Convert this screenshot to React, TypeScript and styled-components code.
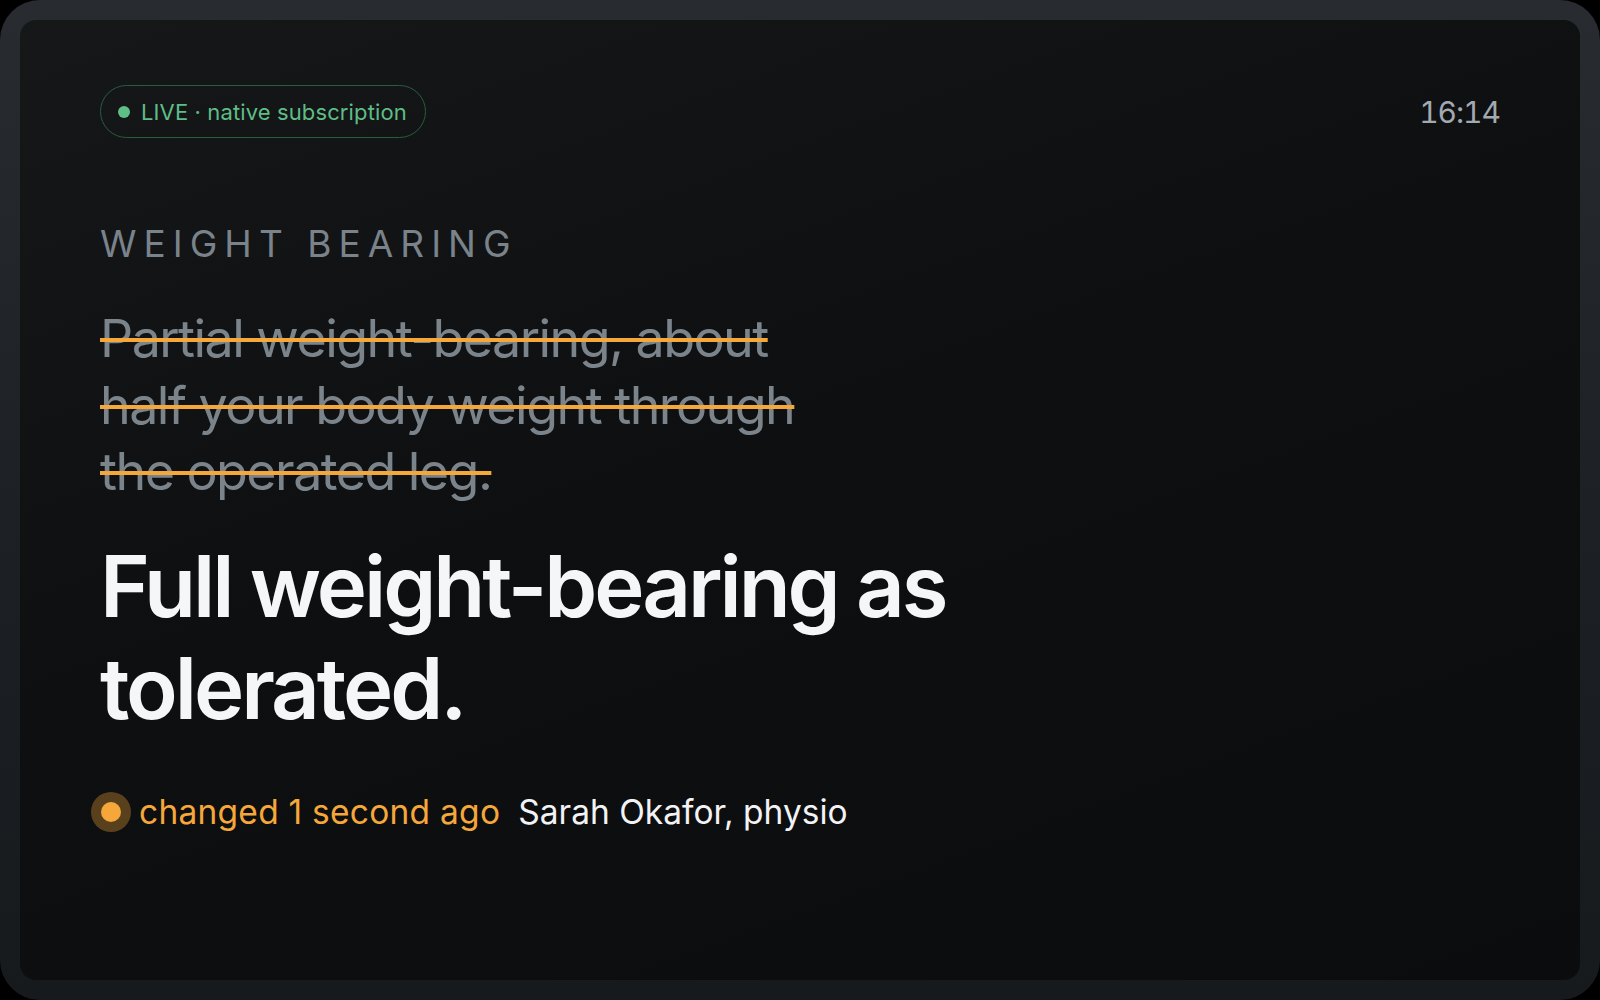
import styled, { createGlobalStyle } from "styled-components";

const GlobalStyle = createGlobalStyle`
  html, body {
    margin: 0;
    padding: 0;
    background: #000;
  }
  body {
    font-family: Inter, "Noto Sans", "Liberation Sans", sans-serif;
    -webkit-font-smoothing: antialiased;
  }
`;

const previousText = "Partial weight-bearing, about half your body weight through the operated leg.";
const currentText = "Full weight-bearing as tolerated.";

function App() {
  return (
    <>
      <GlobalStyle />
      <Bezel>
        <Screen>
          <TopBar>
            <LivePill>
              <LiveDot />
              LIVE · native subscription
            </LivePill>
            <Clock>16:14</Clock>
          </TopBar>
          <Label>Weight bearing</Label>
          <Previous>{previousText}</Previous>
          <Current>{currentText}</Current>
          <MetaRow>
            <ChangeDot />
            <Changed>changed 1 second ago</Changed>
            <Author>Sarah Okafor, physio</Author>
          </MetaRow>
        </Screen>
      </Bezel>
    </>
  );
}

export default App;

const Bezel = styled.div`
  width: 1600px;
  height: 1000px;
  box-sizing: border-box;
  padding: 20px;
  border-radius: 40px;
  background: linear-gradient(180deg, #282c30 0%, #1d2024 50%, #171a1d 100%);
`;

const Screen = styled.div`
  height: 100%;
  box-sizing: border-box;
  padding: 65px 80px 0 80px;
  border-radius: 16px;
  background: linear-gradient(160deg, #151719 0%, #0e0f11 45%, #0b0c0e 100%);
  display: flex;
  flex-direction: column;
  align-items: flex-start;
`;

const TopBar = styled.div`
  align-self: stretch;
  display: flex;
  justify-content: space-between;
  align-items: center;
`;

const LivePill = styled.div`
  display: inline-flex;
  align-items: center;
  gap: 11px;
  height: 53px;
  box-sizing: border-box;
  padding: 0 18px 0 17px;
  border: 1px solid #2b5c3f;
  border-radius: 27px;
  color: #5fbd86;
  font-size: 22px;
  letter-spacing: 0.12px;
`;

const LiveDot = styled.span`
  width: 12px;
  height: 12px;
  border-radius: 50%;
  background: #5fbd86;
`;

const Clock = styled.div`
  color: #a3a9b0;
  font-size: 30px;
  letter-spacing: -1px;
  font-variant-numeric: tabular-nums;
`;

const Label = styled.div`
  margin-top: 84px;
  color: #7a828a;
  font-size: 37px;
  line-height: 44px;
  letter-spacing: 0.19em;
  text-transform: uppercase;
`;

const Previous = styled.div`
  margin-top: 40px;
  max-width: 720px;
  color: #7b838b;
  font-size: 52px;
  line-height: 66.7px;
  letter-spacing: -0.03em;
  text-decoration: line-through;
  text-decoration-color: #f5a73a;
  text-decoration-thickness: 4px;
`;

const Current = styled.div`
  margin-top: 30px;
  max-width: 900px;
  color: #f5f6f8;
  font-size: 85px;
  line-height: 102px;
  font-weight: 600;
  letter-spacing: -0.036em;
`;

const MetaRow = styled.div`
  margin-top: 52px;
  display: flex;
  align-items: center;
  font-size: 33.5px;
  line-height: 40px;
`;

const ChangeDot = styled.span`
  width: 20px;
  height: 20px;
  border-radius: 50%;
  background: #f5a73a;
  box-shadow: 0 0 0 10px rgba(245, 167, 58, 0.33);
  margin-left: 1px;
  margin-right: 18px;
`;

const Changed = styled.span`
  color: #f5a73a;
  letter-spacing: 0.25px;
  margin-right: 18px;
`;

const Author = styled.span`
  color: #f2f3f5;
`;
